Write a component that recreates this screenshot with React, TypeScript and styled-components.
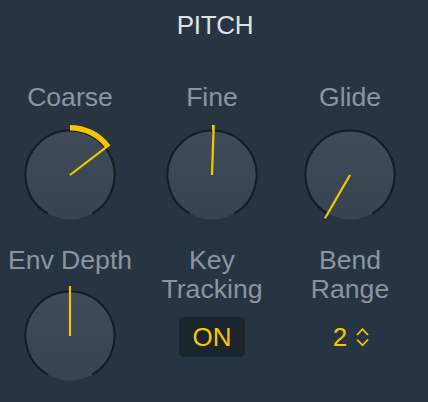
import React from "react";
import styled, { createGlobalStyle } from "styled-components";

const Global = createGlobalStyle`
  html, body { margin: 0; padding: 0; background: #273543; }
  body { font-family: "Liberation Sans", Arial, sans-serif; }
`;

const Panel = styled.div`
  width: 428px;
  height: 402px;
  background: #273543;
  display: flex;
  flex-direction: column;
  align-items: stretch;
  box-sizing: border-box;
  padding-top: 11px;
`;

const Title = styled.div`
  font-size: 26px;
  line-height: 29px;
  color: #dee2e6;
  text-align: center;
  padding-left: 2px;
  letter-spacing: -0.3px;
`;

const Grid = styled.div<{ $top: number }>`
  display: grid;
  grid-template-columns: 140px 144px 132px;
  margin-top: ${(p) => p.$top}px;
`;

const Cell = styled.div<{ $gap: number }>`
  display: flex;
  flex-direction: column;
  align-items: center;
  gap: ${(p) => p.$gap}px;
`;

const Label = styled.div`
  font-size: 26.6px;
  line-height: 29px;
  color: #8a959f;
  text-align: center;
  white-space: nowrap;
`;

const Toggle = styled.div`
  width: 66px;
  height: 40px;
  border-radius: 5px;
  background: #1c252e;
  color: #f7c600;
  font-size: 26px;
  display: flex;
  align-items: center;
  justify-content: center;
  padding-top: 1px;
  box-sizing: border-box;
`;

const Stepper = styled.div`
  display: flex;
  align-items: center;
  gap: 9px;
  color: #f7c600;
  font-size: 26px;
  line-height: 29px;
  padding-left: 2px;
`;

const polar = (cx: number, cy: number, r: number, deg: number) => {
  const a = (deg * Math.PI) / 180;
  return [cx + r * Math.sin(a), cy - r * Math.cos(a)];
};

const arcPath = (cx: number, cy: number, r: number, from: number, to: number) => {
  const [x1, y1] = polar(cx, cy, r, from);
  const [x2, y2] = polar(cx, cy, r, to);
  const large = to - from > 180 ? 1 : 0;
  return `M ${x1} ${y1} A ${r} ${r} 0 ${large} 1 ${x2} ${y2}`;
};

const KnobSvg = styled.svg`
  display: block;
  overflow: visible;
`;

let gid = 0;

function Knob({ angle, from }: { angle: number; from: number }) {
  const id = React.useMemo(() => `kg${gid++}`, []);
  const c = 52;
  const [lx, ly] = polar(c, c, 50, angle);
  const lo = Math.min(from, angle);
  const hi = Math.max(from, angle);
  return (
    <KnobSvg width={104} height={104} viewBox="0 0 104 104">
      <defs>
        <linearGradient id={id} x1="0" y1="0" x2="0" y2="1">
          <stop offset="0" stopColor="#3f4c58" />
          <stop offset="1" stopColor="#37444f" />
        </linearGradient>
      </defs>
      <circle cx={c} cy={c} r={44.5} fill={`url(#${id})`} />
      <path d={arcPath(c, c, 44.5, -150, 150)} fill="none" stroke="#151c22" strokeWidth={2} />
      {hi - lo > 0.5 && (
        <path d={arcPath(c, c, 47.3, lo, hi)} fill="none" stroke="#f7c600" strokeWidth={5.5} />
      )}
      <line x1={c} y1={c} x2={lx} y2={ly} stroke="#f7c600" strokeWidth={2.2} />
    </KnobSvg>
  );
}

function Chevrons() {
  return (
    <svg width={13} height={19} viewBox="0 0 13 19" style={{ display: "block" }}>
      <polyline points="1,7 6.5,1.2 12,7" fill="none" stroke="#f7c600" strokeWidth={1.8} />
      <polyline points="1,11.5 6.5,17.3 12,11.5" fill="none" stroke="#f7c600" strokeWidth={1.8} />
    </svg>
  );
}

export default function App() {
  return (
    <>
      <Global />
      <Panel>
        <Title>PITCH</Title>
        <Grid $top={43}>
          <Cell $gap={11}>
            <Label>Coarse</Label>
            <Knob angle={52.5} from={0} />
          </Cell>
          <Cell $gap={11}>
            <Label>Fine</Label>
            <Knob angle={2} from={0} />
          </Cell>
          <Cell $gap={11}>
            <Label>Glide</Label>
            <Knob angle={-150} from={-150} />
          </Cell>
        </Grid>
        <Grid $top={19}>
          <Cell $gap={9}>
            <Label>Env Depth</Label>
            <Knob angle={0} from={0} />
          </Cell>
          <Cell $gap={13}>
            <Label>
              Key
              <br />
              Tracking
            </Label>
            <Toggle>ON</Toggle>
          </Cell>
          <Cell $gap={19}>
            <Label>
              Bend
              <br />
              Range
            </Label>
            <Stepper>
              <span>2</span>
              <Chevrons />
            </Stepper>
          </Cell>
        </Grid>
      </Panel>
    </>
  );
}
